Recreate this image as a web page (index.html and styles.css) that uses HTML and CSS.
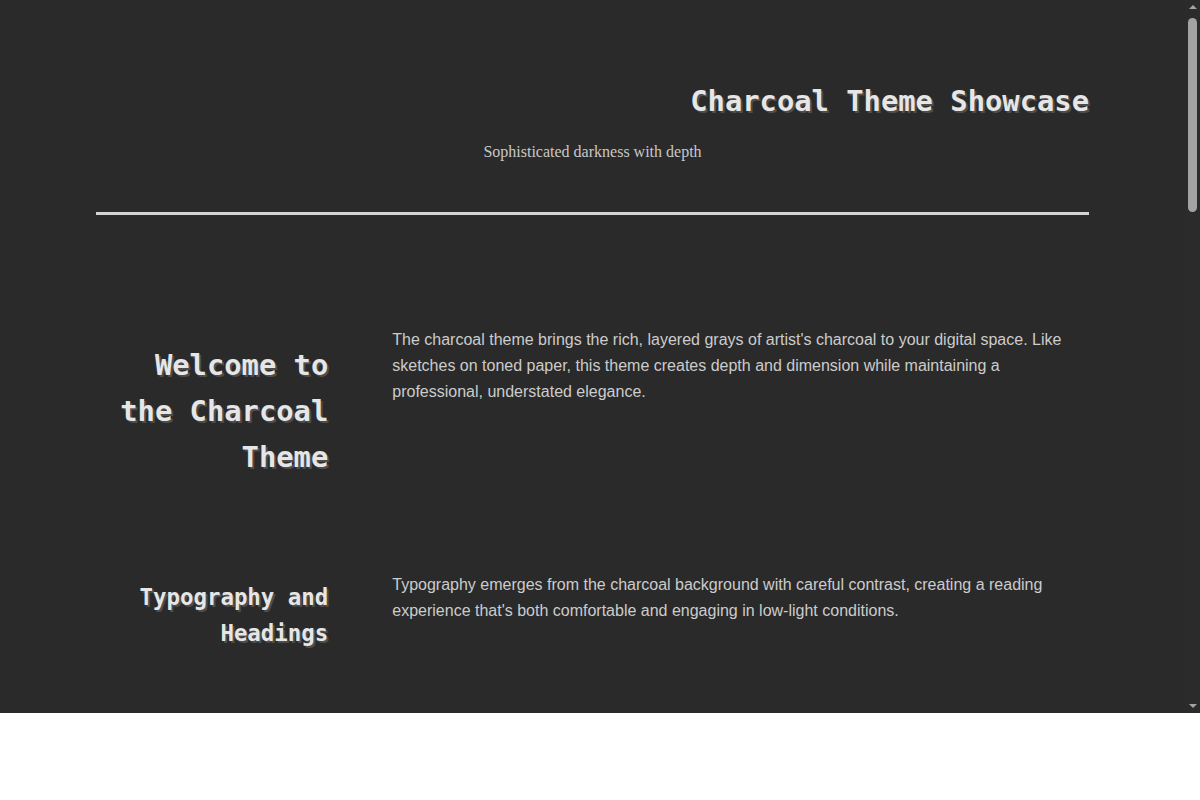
FILE: index.html
```html
<!DOCTYPE html>
<html lang="en">
<head>
<meta charset="utf-8">
<title>Charcoal Theme Showcase</title>
<link rel="stylesheet" href="styles.css">
</head>
<body>
<div class="frame">
  <div class="page">
    <div class="inner">
      <header class="hero">
        <h1 class="hero-title">Charcoal Theme Showcase</h1>
        <p class="hero-sub">Sophisticated darkness with depth</p>
      </header>
      <section class="row row-first">
        <h2 class="row-head">Welcome to the Charcoal Theme</h2>
        <p class="row-text">The charcoal theme brings the rich, layered grays of artist's charcoal to your digital space. Like sketches on toned paper, this theme creates depth and dimension while maintaining a professional, understated elegance.</p>
      </section>
      <section class="row row-next">
        <h3 class="row-sub">Typography and Headings</h3>
        <p class="row-text">Typography emerges from the charcoal background with careful contrast, creating a reading experience that's both comfortable and engaging in low-light conditions.</p>
      </section>
    </div>
  </div>
  <div class="scrollbar" aria-hidden="true">
    <span class="sb-arrow sb-up"></span>
    <span class="sb-thumb"></span>
    <span class="sb-arrow sb-down"></span>
  </div>
</div>
</body>
</html>
```
FILE: styles.css
```css
html, body {
  margin: 0;
  padding: 0;
  background: #ffffff;
}
.frame {
  position: relative;
  height: 713px;
  background: #2a2a2a;
}
.page {
  height: 713px;
  overflow: hidden;
  margin-right: 15px;
  color: #cccccc;
}
.inner {
  padding: 0 96px;
}
.scrollbar {
  position: absolute;
  top: 0;
  right: 0;
  bottom: 0;
  width: 15px;
  background: #2b2b2b;
  display: flex;
  flex-direction: column;
  align-items: center;
}
.sb-arrow {
  width: 0;
  height: 0;
  border-left: 4px solid transparent;
  border-right: 4px solid transparent;
}
.sb-up {
  margin-top: 5px;
  border-bottom: 4px solid #a3a3a3;
}
.sb-thumb {
  margin-top: 9px;
  width: 9px;
  height: 194px;
  border-radius: 5px;
  background: #a3a3a3;
}
.sb-down {
  margin-top: auto;
  margin-bottom: 5px;
  border-top: 4px solid #a3a3a3;
}
.hero {
  padding-top: 84px;
  border-bottom: 3px solid #d4d4d4;
  padding-bottom: 51px;
}
.hero-title {
  margin: 0;
  text-align: right;
  font-family: "DejaVu Sans Mono", monospace;
  font-weight: bold;
  font-size: 28.8px;
  line-height: 34px;
  color: #e6e6e6;
  text-shadow: 2px 2px 0 #4d4d4d;
}
.hero-sub {
  margin: 25px 0 0;
  text-align: center;
  font-family: "Liberation Serif", serif;
  font-size: 16px;
  line-height: 18px;
  color: #c8c8c8;
}
.row {
  display: grid;
  grid-template-columns: 1fr 3fr;
  gap: 64px;
  align-items: start;
}
.row-first {
  margin-top: 112px;
}
.row-next {
  margin-top: 92px;
}
.row-head {
  margin: 15px 0 0;
  text-align: right;
  font-family: "DejaVu Sans Mono", monospace;
  font-weight: bold;
  font-size: 28.8px;
  line-height: 46px;
  color: #e6e6e6;
  text-shadow: 2px 2px 0 #4d4d4d;
}
.row-sub {
  margin: 7px 0 0;
  text-align: right;
  font-family: "DejaVu Sans Mono", monospace;
  font-weight: bold;
  font-size: 22.4px;
  line-height: 36px;
  color: #e6e6e6;
  text-shadow: 2px 2px 0 #4d4d4d;
}
.row-text {
  margin: 0;
  font-family: "Liberation Sans", Arial, sans-serif;
  font-size: 16px;
  line-height: 26px;
  color: #cccccc;
}
```
